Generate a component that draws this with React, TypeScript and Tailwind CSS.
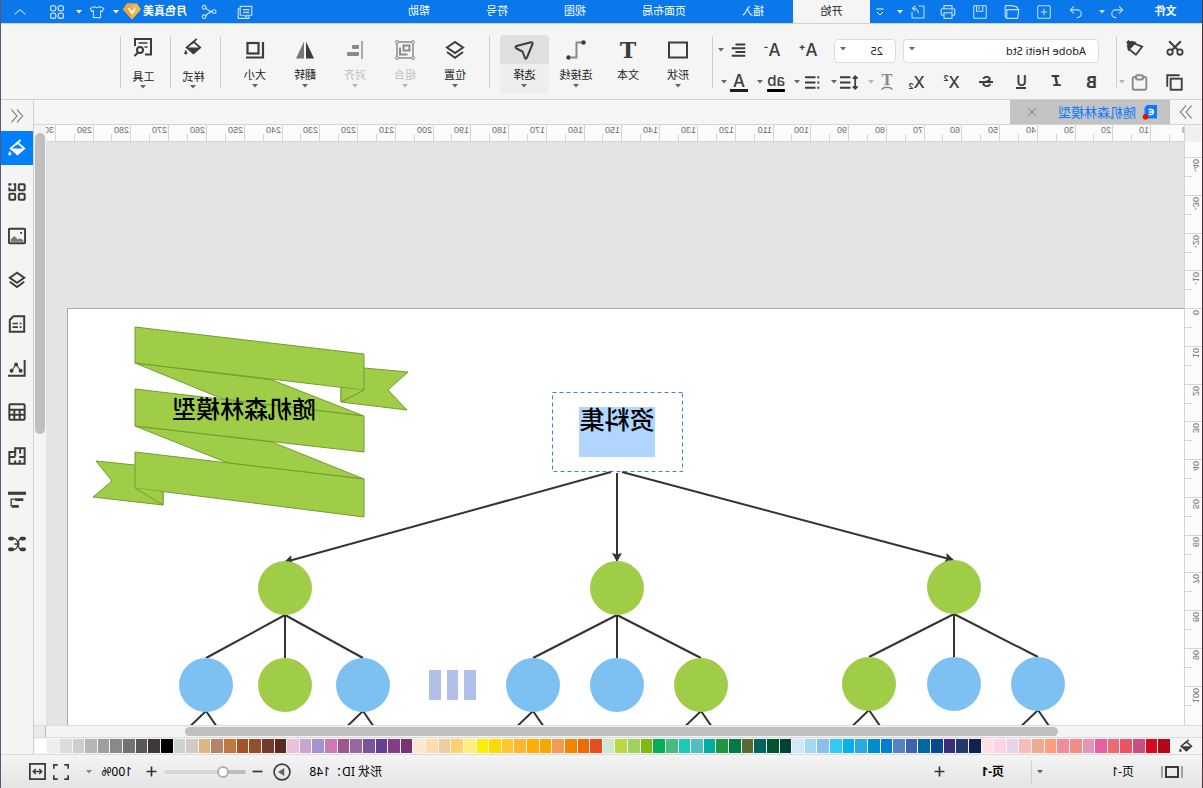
import type { ReactNode } from "react";

interface IconProps {
  children: ReactNode;
  size?: number;
  stroke?: number;
  className?: string;
}

/* All icons share a 20 unit grid */
function Icon({ children, size = 20, stroke = 2, className = "" }: IconProps) {
  return (
    <svg
      width={size}
      height={size}
      viewBox="0 0 20 20"
      fill="none"
      stroke="currentColor"
      strokeWidth={stroke}
      className={`shrink-0 ${className}`}
      aria-hidden="true"
    >
      {children}
    </svg>
  );
}

function Caret({ className = "w-[7px]" }: { className?: string }) {
  return (
    <span className={`flex shrink-0 justify-center ${className}`}>
      <svg width="6" height="4" viewBox="0 0 6 4" fill="currentColor" aria-hidden="true">
        <path d="M0 0h6L3 3.6z" />
      </svg>
    </span>
  );
}

function Bucket() {
  return (
    <>
      <path d="M9.5 4L17 10.500L9.500 17L2 10.500Z" />
      <path d="M2 10.500h15L9.500 17.500z" fill="currentColor" stroke="none" />
      <path d="M6 1l5.500 5.500" />
      <path d="M18 13l1.600 3a1.700 1.700 0 1 1-3.200 0z" fill="currentColor" stroke="none" />
    </>
  );
}

function Layers() {
  return (
    <>
      <path d="M10 2L18 7.500L10 13L2 7.500Z" />
      <path d="M2 12L10 17.800L18 12" />
    </>
  );
}

function Separator() {
  return <div className="mt-3 h-[52px] w-px shrink-0 bg-[#cfcfcf]" />;
}

interface ToolProps {
  label: string;
  children: ReactNode;
  className?: string;
}

function Tool({ label, children, className = "w-8" }: ToolProps) {
  return (
    <button
      type="button"
      aria-label={label}
      title={label}
      className={`flex h-full shrink-0 items-center justify-center ${className}`}
    >
      {children}
    </button>
  );
}

interface BigToolProps extends ToolProps {
  caret?: boolean;
  active?: boolean;
  disabled?: boolean;
  compact?: boolean;
}

function BigTool({ label, children, className = "w-[50px]", caret = true, active, disabled, compact }: BigToolProps) {
  return (
    <button
      type="button"
      disabled={disabled}
      className={`mt-[11px] flex h-[59px] shrink-0 flex-col items-center rounded-sm ${className} ${
        active ? "bg-[#eeeeee]" : ""
      } ${disabled ? "text-[#8a8a8a]" : "text-[#3c3c3c]"}`}
    >
      <span
        className={`flex w-full items-center justify-center rounded-t-sm ${compact ? "h-6" : "h-[29px]"} ${
          active ? "bg-[#dfdfdf]" : ""
        }`}
      >
        {children}
      </span>
      <span
        className={`text-[11px] leading-4 ${compact ? "mt-2.5" : "mt-[3px]"} ${
          disabled ? "text-[#c0c0c0]" : "text-[#222]"
        }`}
      >
        {label}
      </span>
      {caret && (
        <span className={compact ? "" : "mt-px"}>
          <Caret className={disabled ? "w-[7px] text-[#b8b8b8]" : "w-[7px] text-[#666]"} />
        </span>
      )}
    </button>
  );
}

const MENUS = [
  { label: "插入", width: "w-20" },
  { label: "页面布局", width: "w-[98px]" },
  { label: "视图", width: "w-20" },
  { label: "符号", width: "w-[76px]" },
  { label: "帮助", width: "w-20" },
];

function TitleBar() {
  return (
    <header className="flex h-[23px] shrink-0 items-center bg-[#0a77eb] text-[11px] text-white">
      <button type="button" className="w-[73px] font-bold">
        文件
      </button>
      <Tool label="撤销" className="w-6 text-[#c4defa]">
        <Icon size={14} stroke={1.6}>
          <path d="M7 2L2 7l5 5M2 7h10a5.500 5.500 0 0 1 0 11h-1" />
        </Icon>
      </Tool>
      <Caret className="w-1.5 text-[#c4defa]" />
      <Tool label="重做" className="ml-[7px] w-8 text-[#c4defa]">
        <Icon size={14} stroke={1.6}>
          <path d="M13 2l5 5-5 5M18 7H8a5.500 5.500 0 0 0 0 11h1" />
        </Icon>
      </Tool>
      <Tool label="新建" className="w-8 text-[#c4defa]">
        <Icon size={14} stroke={1.5}>
          <rect x="1" y="1" width="18" height="18" rx="1.500" />
          <path d="M10 5.500v9M5.500 10h9" />
        </Icon>
      </Tool>
      <Tool label="打开" className="w-8 text-[#c4defa]">
        <Icon size={16} stroke={1.4}>
          <path d="M1.500 7h15v11H3zM3 7V5l2-2h3l1.500-1H18l.5 1v13l-2 2" />
        </Icon>
      </Tool>
      <Tool label="保存" className="w-8 text-[#c4defa]">
        <Icon size={14} stroke={1.5}>
          <rect x="1" y="1" width="18" height="18" rx="1" />
          <path d="M6 1v8h9V1M11.500 3v3.500" />
        </Icon>
      </Tool>
      <Tool label="打印" className="w-8 text-[#c4defa]">
        <Icon size={16} stroke={1.4}>
          <path d="M5 6V2h10v4M5 14H2.500L1.500 13V7L2.500 6h15l1 1v6l-1 1H15" />
          <rect x="5" y="11" width="10" height="7" />
          <path d="M4 8.500h2" />
        </Icon>
      </Tool>
      <Tool label="导出" className="w-7 text-[#c4defa]">
        <Icon size={14} stroke={1.5}>
          <path d="M9 1.500H1.500v17h17V10" />
          <path d="M13 1.500l5 3-3.500 4.500M18 4.500c-5 0-8 3-9 7" />
        </Icon>
      </Tool>
      <Caret className="w-2" />
      <Tool label="自定义" className="ml-1.5 w-5">
        <Icon size={10} stroke={2}>
          <path d="M3 4h14M4 10l6 6 6-6" />
        </Icon>
      </Tool>
      <button type="button" className="h-full w-[77px] bg-[#f5f5f5] text-[#222]">
        开始
      </button>
      {MENUS.map((m) => (
        <button key={m.label} type="button" className={m.width}>
          {m.label}
        </button>
      ))}
      <div className="ml-auto flex h-full items-center">
        <Tool label="消息" className="w-9 text-[#c4defa]">
          <Icon size={16} stroke={1.4}>
            <path d="M1.500 3H16v11h-5l-3 2v-2H1.500zM16 6h2.500v12H5v-4M4.500 7h8M4.500 10.500h8" />
          </Icon>
        </Tool>
        <Tool label="分享" className="w-9 text-[#c4defa]">
          <Icon size={16} stroke={1.5}>
            <circle cx="3.500" cy="9.500" r="2.300" />
            <circle cx="16" cy="4" r="2.300" />
            <circle cx="16" cy="16" r="2.300" />
            <path d="M6 9.500C10 9 12 7.500 14 5.500M6 9.500c4 .5 6 2.500 8 5" />
          </Icon>
        </Tool>
        <button type="button" className="ml-1 flex items-center gap-0.5 font-bold">
          月色真美
          <svg width="18" height="17" viewBox="0 0 18 17" aria-hidden="true">
            <path d="M4 0.500h10l4 6L9 16.500 0 6.500z" fill="#f7b84b" />
            <path d="M9 16.500L18 6.500l-4-6H9z" fill="#eda63c" />
            <path d="M5.500 5L9 10l3.500-5" fill="none" stroke="#fff" strokeWidth="1.800" />
          </svg>
          <Caret className="ml-0.5 w-1.5" />
        </button>
        <Tool label="主题" className="ml-0.5 w-7 text-[#c4defa]">
          <Icon size={16} stroke={1.4}>
            <path d="M7 3c1 2 5 2 6 0l5.500 2.500-2 4-2-1V17h-9V8.500l-2 1-2-4z" />
          </Icon>
        </Tool>
        <Caret className="w-2" />
        <Tool label="应用" className="w-9 text-[#c4defa]">
          <Icon size={16} stroke={1.6}>
            <rect x="2" y="2" width="6.500" height="6.500" rx="2.500" />
            <rect x="11.500" y="2" width="6.500" height="6.500" rx="2.500" />
            <rect x="2" y="11.500" width="6.500" height="6.500" rx="2.500" />
            <rect x="11.500" y="11.500" width="6.500" height="6.500" rx="2.500" />
          </Icon>
        </Tool>
        <Tool label="收起" className="w-[38px] text-[#c4defa]">
          <Icon size={12} stroke={1.8}>
            <path d="M1 14l9-8 9 8" />
          </Icon>
        </Tool>
      </div>
    </header>
  );
}

function ClipboardTools() {
  return (
    <div className="w-[85px] shrink-0 pl-[7px] pt-2 text-[#3c3c3c]">
      <div className="flex h-8 items-center">
        <Tool label="剪切" className="w-10">
          <Icon size={18}>
            <circle cx="4.500" cy="14.500" r="3" />
            <circle cx="15.500" cy="14.500" r="3" />
            <path d="M3.500 2.500L13.500 12.500M16.500 2.500L6.500 12.500" strokeWidth="2.200" />
          </Icon>
        </Tool>
        <Tool label="格式刷" className="w-10">
          <Icon size={18}>
            <path d="M2 8.500L11 5l6 6-8 6.500Z" />
            <path d="M10 4l4-1 4 4-1 4.500z" fill="currentColor" />
            <path d="M15 6l3.500-3.500" strokeWidth="4" />
          </Icon>
        </Tool>
      </div>
      <div className="mt-0.5 flex h-8 items-center">
        <Tool label="复制" className="w-10">
          <Icon size={17} stroke={2.2}>
            <path d="M4 1.500h14.500V15" />
            <rect x="1.500" y="5.500" width="13" height="13" />
          </Icon>
        </Tool>
        <Tool label="粘贴" className="w-[30px] text-[#8a8a8a]">
          <Icon size={17} stroke={2.2}>
            <rect x="2" y="3.500" width="16" height="15" rx="2" />
            <rect x="6" y="1.500" width="8" height="5" rx="1" fill="#f5f5f5" />
          </Icon>
        </Tool>
        <Caret className="w-1.5 text-[#b5b5b5]" />
      </div>
    </div>
  );
}

function FontTools() {
  return (
    <div className="w-[403px] shrink-0 pt-2.5 text-[#3c3c3c]">
      <div className="flex h-8 items-center pl-[17px]">
        <label className="relative block w-[196px] text-[#666]">
          <select
            aria-label="字体"
            className="h-6 w-full appearance-none rounded-sm border border-[#dcdcdc] bg-white pl-3 text-[11px] text-[#222]"
          >
            <option>Adobe Heiti Std</option>
          </select>
          <Caret className="pointer-events-none absolute right-1.5 top-2.5 w-1.5" />
        </label>
        <label className="relative ml-[7px] block w-[62px] text-[#666]">
          <select
            aria-label="字号"
            className="h-6 w-full appearance-none rounded-sm border border-[#dcdcdc] bg-white pl-3 text-[11px] text-[#222]"
          >
            <option>25</option>
          </select>
          <Caret className="pointer-events-none absolute right-1.5 top-2.5 w-1.5" />
        </label>
        <Tool label="增大字号" className="ml-2 w-9 font-['Inter',sans-serif]">
          <span className="text-[17px] font-medium leading-none">A</span>
          <span className="-mt-2 text-[10px] font-bold leading-none">+</span>
        </Tool>
        <Tool label="减小字号" className="w-9 font-['Inter',sans-serif]">
          <span className="text-[17px] font-medium leading-none">A</span>
          <span className="-mt-2 text-[10px] font-bold leading-none">-</span>
        </Tool>
        <Tool label="对齐方式" className="w-[30px]">
          <Icon size={15} stroke={2.6}>
            <path d="M1 2h13M1 7h18M1 12h13M1 17h18" />
          </Icon>
        </Tool>
        <Caret className="w-1.5 text-[#666]" />
      </div>
      <div className="flex h-8 items-center pl-[7px]">
        <Tool label="加粗" className="w-[35px] font-['Inter',sans-serif]">
          <span className="text-[16px] font-bold">B</span>
        </Tool>
        <Tool label="斜体" className="w-[35px]">
          <span className="font-['Liberation_Mono',monospace] text-[17px] font-bold italic">I</span>
        </Tool>
        <Tool label="下划线" className="w-[35px] flex-col font-['Inter',sans-serif]">
          <span className="text-[14px] font-semibold leading-3">U</span>
          <span className="h-0.5 w-2.5 bg-[#3c3c3c]" />
        </Tool>
        <Tool label="删除线" className="w-[35px] font-['Inter',sans-serif]">
          <span className="relative text-[15px] font-semibold">
            S
            <span className="absolute -left-0.5 top-2.5 h-0.5 w-3.5 bg-[#3c3c3c]" />
          </span>
        </Tool>
        <Tool label="上标" className="w-[35px] font-['Inter',sans-serif]">
          <span className="text-[16px] font-medium leading-none">X</span>
          <span className="-mt-2 text-[8px] font-bold leading-none">2</span>
        </Tool>
        <Tool label="下标" className="w-[35px] font-['Inter',sans-serif]">
          <span className="text-[16px] font-medium leading-none">X</span>
          <span className="mt-2 text-[8px] font-bold leading-none">2</span>
        </Tool>
        <Tool label="艺术字" className="w-6 flex-col text-[#8a8a8a]">
          <span className="font-['DejaVu_Serif',serif] text-[14px] font-bold leading-3">T</span>
          <svg width="12" height="4" viewBox="0 0 12 4" fill="none" stroke="currentColor" strokeWidth="1.500" aria-hidden="true">
            <path d="M.5 3.500C3 .5 9 .5 11.500 3.500" />
          </svg>
        </Tool>
        <Caret className="mr-1.5 w-[7px] text-[#b5b5b5]" />
        <Tool label="行距" className="w-6">
          <Icon size={19}>
            <path d="M4 4v12M1.500 6L4 3.500 6.500 6M1.500 14L4 16.500 6.500 14" strokeWidth="1.800" />
            <path d="M9 4.500h11M9 10h11M9 15.500h11" strokeWidth="2.200" />
          </Icon>
        </Tool>
        <Caret className="mr-1.5 w-[7px] text-[#666]" />
        <Tool label="项目符号" className="w-6">
          <Icon size={15} stroke={2.6}>
            <path d="M1 3h2.500M1 10h2.500M1 17h2.500M6 3h14M6 10h14M6 17h14" />
          </Icon>
        </Tool>
        <Caret className="mr-1.5 w-[7px] text-[#666]" />
        <Tool label="突出显示" className="w-6 flex-col font-['Inter',sans-serif]">
          <span className="text-[15px] font-medium leading-4">ab</span>
          <span className="h-[3px] w-[18px] bg-black" />
        </Tool>
        <Caret className="mr-1.5 w-[7px] text-[#666]" />
        <Tool label="字体颜色" className="w-6 flex-col font-['Inter',sans-serif]">
          <span className="text-[17px] font-medium leading-4">A</span>
          <span className="h-[3px] w-[18px] bg-[#1c1c1c]" />
        </Tool>
        <Caret className="text-[#666]" />
      </div>
    </div>
  );
}

function RibbonBar() {
  return (
    <div className="flex h-[77px] shrink-0 border-b border-t border-[#d0d0d0] bg-[#f5f5f5]">
      <ClipboardTools />
      <Separator />
      <FontTools />
      <Separator />
      <BigTool label="形状" className="ml-[9px] w-[50px]">
        <Icon>
          <rect x="1" y="2.500" width="18" height="15" />
        </Icon>
      </BigTool>
      <BigTool label="文本" caret={false}>
        <span className="font-['DejaVu_Serif',serif] text-[22px] font-bold leading-none">T</span>
      </BigTool>
      <BigTool label="连接线" className="w-[54px]">
        <Icon>
          <path d="M4 2.500h5.500v15H15" stroke="#8a8a8a" />
          <circle cx="2.500" cy="2.500" r="2.200" fill="currentColor" stroke="none" />
          <circle cx="17.500" cy="17.500" r="2.200" fill="currentColor" stroke="none" />
        </Icon>
      </BigTool>
      <BigTool label="选择" className="w-[49px]" active>
        <Icon>
          <path d="M1.500 4Q1 2 3 2.200L17.500 6Q19.500 7 17.500 8.500L11.500 11.500 9 18Q8.200 19.500 7.200 17.800Z" strokeLinejoin="round" />
        </Icon>
      </BigTool>
      <div className="w-[10px] shrink-0" />
      <Separator />
      <BigTool label="位置" className="ml-[9px] w-[50px]">
        <Icon>
          <Layers />
        </Icon>
      </BigTool>
      <BigTool label="组合" disabled>
        <Icon stroke={1.5}>
          <rect x="2" y="2" width="16" height="16" />
          <rect x="5.500" y="5.500" width="6" height="5" strokeWidth="2" />
          <path d="M8.500 13.500v1H15V8.500h-1" strokeWidth="2" />
          <g fill="#f5f5f5" strokeWidth="1">
            <circle cx="2" cy="2" r="1.500" />
            <circle cx="18" cy="2" r="1.500" />
            <circle cx="2" cy="18" r="1.500" />
            <circle cx="18" cy="18" r="1.500" />
          </g>
        </Icon>
      </BigTool>
      <BigTool label="对齐" disabled>
        <Icon>
          <path d="M3 1v18" stroke="#a8a8a8" />
          <rect x="6" y="5" width="7" height="4" rx="1" fill="currentColor" stroke="none" />
          <rect x="6" y="12" width="12" height="4" rx="1" fill="currentColor" stroke="none" />
        </Icon>
      </BigTool>
      <BigTool label="翻转">
        <Icon>
          <path d="M9 1.500V18.500H1z" fill="currentColor" stroke="none" />
          <path d="M11 1.500V18.500h8z" fill="#777" stroke="none" />
        </Icon>
      </BigTool>
      <BigTool label="大小">
        <Icon stroke={2.2}>
          <rect x="6.500" y="3" width="11" height="10.500" />
          <path d="M2 2v15.500h17" />
        </Icon>
      </BigTool>
      <div className="w-[9px] shrink-0" />
      <Separator />
      <BigTool label="样式" className="w-[49px] pl-1" compact>
        <Icon size={18}>
          <Bucket />
        </Icon>
      </BigTool>
      <Separator />
      <BigTool label="工具" className="w-[49px] pl-1" compact>
        <Icon size={20}>
          <path d="M8 17.500H2V2h16v7" />
          <path d="M5.500 6h9M5.500 10h3" strokeWidth="1.600" />
          <circle cx="13" cy="13" r="3" />
          <path d="M15 15.500l3.500 3.500" />
        </Icon>
      </BigTool>
      <Separator />
    </div>
  );
}

function DocumentTabs() {
  return (
    <div className="flex h-[25px] shrink-0 border-b border-[#d4d4d4] bg-[#f5f5f5]">
      <button type="button" aria-label="收起面板" className="flex w-8 items-center justify-center text-[#777]">
        <Icon size={14} stroke={1.6}>
          <path d="M2 1l8 9-8 9M10 1l8 9-8 9" />
        </Icon>
      </button>
      <div className="flex w-40 items-center bg-[#c3c3c3] pl-3">
        <svg width="16" height="16" viewBox="0 0 16 16" className="shrink-0" aria-hidden="true">
          <path d="M1 1h10l2.500 3v10.500H1z" fill="#0a7bff" />
          <path d="M9.500 5.500H7a2.500 2.500 0 0 0 0 5h2.500M5 8h4" fill="none" stroke="#fff" strokeWidth="1.300" />
          <circle cx="12.500" cy="12.800" r="2.800" fill="#f00" />
        </svg>
        <a href="#doc" className="ml-1.5 text-[13px] leading-5 text-[#0a7bff]">
          随机森林模型
        </a>
        <button type="button" aria-label="关闭" className="ml-[22px] text-[#777]">
          <Icon size={8} stroke={2.4}>
            <path d="M1 1l18 18M19 1L1 19" />
          </Icon>
        </button>
      </div>
    </div>
  );
}

const TICK = 37.77;

function HorizontalRuler() {
  return (
    <div className="h-[17px] min-w-0 flex-1 overflow-hidden border-b border-[#d4d4d4] bg-[#fbfbfb]">
      <svg width="1500" height="16" className="max-w-none font-['Liberation_Sans',sans-serif]" aria-hidden="true">
        {Array.from({ length: 31 }, (_, i) => {
          const x = Math.round(i * TICK) - 5;
          return (
            <g key={i}>
              <rect x={x} y={0} width={1} height={16} fill="#d4d4d4" />
              <rect x={x + 19} y={9} width={1} height={7} fill="#d4d4d4" />
              <text x={x + 2} y={8} fontSize={9} fill="#6d6d6d">
                {i * 10}
              </text>
            </g>
          );
        })}
      </svg>
    </div>
  );
}

function VerticalRuler() {
  return (
    <div className="w-[18px] shrink-0 overflow-hidden border-r border-[#d4d4d4] bg-[#fbfbfb]">
      <svg width="17" height="1200" className="font-['Liberation_Sans',sans-serif]" aria-hidden="true">
        {Array.from({ length: 15 }, (_, i) => {
          const y = 15 + Math.round(i * TICK);
          return (
            <g key={i}>
              <rect x={0} y={y} width={17} height={1} fill="#d4d4d4" />
              <rect x={10} y={y + 19} width={7} height={1} fill="#d4d4d4" />
              <text
                transform={`translate(9 ${y + 2}) rotate(-90)`}
                textAnchor="end"
                fontSize={9}
                fill="#6d6d6d"
              >
                {(i - 4) * 10}
              </text>
            </g>
          );
        })}
      </svg>
    </div>
  );
}

const GREEN = "#9fcd48";
const BLUE = "#7dc1f2";

const TREES = [
  { x: 230, y: 445, kids: [{ x: 146, fill: BLUE, leaf: true }, { x: 230, fill: BLUE, leaf: false }, { x: 315, fill: GREEN, leaf: true }] },
  { x: 567, y: 446, kids: [{ x: 483, fill: GREEN, leaf: true }, { x: 567, fill: BLUE, leaf: false }, { x: 651, fill: BLUE, leaf: true }] },
  { x: 899, y: 446, kids: [{ x: 821, fill: BLUE, leaf: true }, { x: 899, fill: GREEN, leaf: false }, { x: 978, fill: BLUE, leaf: true }] },
];

function Diagram() {
  return (
    <svg
      width="1138"
      height="1000"
      className="absolute left-0 top-0 max-w-none font-['Noto_Sans_CJK_SC',sans-serif]"
      role="img"
      aria-label="随机森林模型"
    >
      <defs>
        <marker id="arrow" markerWidth="10" markerHeight="10" refX="8" refY="5" orient="auto" markerUnits="userSpaceOnUse">
          <path d="M0 0L9 5L0 10L1.500 5z" fill="#333" />
        </marker>
      </defs>

      {/* Banner: tails, folded strips, then the three front bands */}
      <g fill={GREEN} stroke="#739c2c" strokeWidth="1" strokeLinejoin="round">
        <path d="M843 240V260L777 268L796 248L776 230L820 226L843 240M843 260L820 248" />
        <path d="M1088 319L1049 323L1021 340V363L1091 355L1072 339Z" />
        <path d="M1049 221L912 238L820 274L961 257Z" />
        <path d="M1049 284L912 300L820 337L956 321Z" />
        <path d="M1049 185L820 212V248L1049 221Z" />
        <path d="M1049 247L820 274V310L1049 284Z" />
        <path d="M1049 310L820 337V375L1049 346Z" />
        <path d="M843 246V260L820 248M1021 350V363L1049 346" />
      </g>
      <text x="940" y="276" fontSize="24" fontWeight="500" textAnchor="middle">
        随机森林模型
      </text>

      {/* Root node, in text editing state */}
      <rect x="501.500" y="250.500" width="130" height="79" fill="#fff" stroke="#3d85dc" strokeDasharray="4 3" />
      <rect x="529" y="265" width="76" height="50" fill="#b0d5ff" />
      <text x="567" y="287" fontSize="25" fontWeight="500" textAnchor="middle">
        资料集
      </text>

      <g stroke="#333" strokeWidth="2" fill="none">
        <path d="M562 330L231 418" markerEnd="url(#arrow)" />
        <path d="M567 331V419" markerEnd="url(#arrow)" />
        <path d="M573 330L899 420" markerEnd="url(#arrow)" />
        {TREES.map((t) =>
          t.kids.map((k) => (
            <g key={k.x}>
              <path d={`M${t.x} ${t.y + 27}L${k.x} ${t.y + 70}`} />
              {k.leaf && <path d={`M${k.x - 20} ${t.y + 152}L${k.x} ${t.y + 123}L${k.x + 28} ${t.y + 150}`} />}
            </g>
          ))
        )}
      </g>
      {TREES.map((t) => (
        <g key={t.x}>
          <circle cx={t.x} cy={t.y} r="27" fill={GREEN} />
          {t.kids.map((k) => (
            <circle key={k.x} cx={k.x} cy={t.y + 97} r="27" fill={k.fill} />
          ))}
        </g>
      ))}
      <path d="M708 528h12v30h-12zM726 528h11v30h-11zM743 528h12v30h-12z" fill="#b1c0e8" />
    </svg>
  );
}

const PALETTE = [
  "#b40717", "#d70b1f", "#c8507a", "#e85464", "#eb6b70", "#e660a0", "#e295b5", "#ee8d8a", "#f08d9b", "#ff9e7a",
  "#efaa94", "#f6bebb", "#e8d4e8", "#ffd3e5", "#fde0e6", "#11214f", "#223a70", "#3d2d78", "#084890", "#0068a3",
  "#3e62ae", "#5583c5", "#007fcf", "#008dcf", "#2ba8e0", "#00b3ef", "#31c9f9", "#89c1ea", "#a2daf0", "#cfeaf6",
  "#004038", "#00572f", "#006460", "#566c2e", "#007a45", "#1f9640", "#00ada0", "#52bec2", "#1acbb3", "#4aba80",
  "#00b052", "#7fba10", "#a3d065", "#bcd83f", "#cfe7cb", "#e35020", "#ed6a00", "#f18500", "#f59a55", "#f3a800",
  "#ffad00", "#ffb733", "#fbc834", "#ffd900", "#ffee00", "#fdf07f", "#ffd26e", "#ebce99", "#fedcae", "#fce8d1",
  "#7a3272", "#823f86", "#683f98", "#76559b", "#9769a0", "#9e578c", "#cd7ab2", "#a891d0", "#c7a6ca", "#e9c1db",
  "#592a1e", "#753a2e", "#954e2b", "#a75328", "#bf793f", "#b4846c", "#deb684", "#d4cac5", "#c9d5cc", "#000000",
  "#3e3837", "#595959", "#717171", "#898989", "#9f9f9f", "#b4b7b6", "#cdcfce", "#dcdcdc", "#eeeeee", "#ffffff",
];

function Workspace() {
  return (
    <main className="flex min-w-0 flex-1 flex-col">
      <DocumentTabs />
      <div className="flex min-h-0 flex-1">
        <div className="flex min-w-0 flex-1 flex-col">
          <div className="flex">
            <div className="h-[17px] w-[18px] shrink-0 border-r border-[#d4d4d4] bg-[#f0f0f0]" />
            <HorizontalRuler />
          </div>
          <div className="flex min-h-0 flex-1">
            <VerticalRuler />
            <div className="relative min-w-0 flex-1 overflow-hidden bg-[#e4e4e4] pr-[21px] pt-[166px]">
              <div className="h-full border-r border-t border-[#ababab] bg-white" />
              <Diagram />
            </div>
          </div>
        </div>
        <div className="w-3 shrink-0 bg-[#f4f4f4] px-px pt-2">
          <div className="h-[301px] rounded-full bg-[#bfbfbf]" />
        </div>
      </div>
      <div className="flex h-[13px] shrink-0 border-b border-t border-[#dcdcdc] bg-[#f4f4f4]">
        <div className="flex-1 py-px pl-36 pr-[139px]">
          <div className="h-full rounded-full bg-[#bfbfbf]" />
        </div>
        <div className="w-3 border-l border-[#b8b8b8] bg-[#e9e9e9]" />
      </div>
      <div className="flex h-4 shrink-0 items-center bg-[#f5f5f5]">
        <Tool label="填充" className="w-8 text-[#3c3c3c]">
          <Icon size={14} stroke={2}>
            <Bucket />
          </Icon>
        </Tool>
        <div className="flex h-[14px] min-w-0 flex-1 gap-px pr-px">
          {PALETTE.map((color) => (
            <button key={color} type="button" aria-label={color} className="min-w-0 flex-1" style={{ background: color }} />
          ))}
        </div>
      </div>
    </main>
  );
}

const PANELS: { label: string; icon: ReactNode }[] = [
  {
    label: "符号库",
    icon: (
      <>
        <rect x="1.500" y="1.500" width="6.500" height="6.500" rx="1" />
        <path d="M14 1.500h-2v6.500h6.500V5M16 1.500h2.500v1.500" />
        <rect x="1.500" y="12" width="6.500" height="6.500" rx="1" />
        <rect x="12" y="12" width="6.500" height="6.500" rx="1" />
      </>
    ),
  },
  {
    label: "图片",
    icon: (
      <>
        <rect x="1" y="2" width="18" height="16" rx="1" />
        <path d="M3 16.500v-2l4-2 2 1.500 4-4 4 4v2.500z" fill="#777" stroke="none" />
        <circle cx="5.500" cy="6.500" r="1.200" fill="currentColor" stroke="none" />
      </>
    ),
  },
  { label: "图层", icon: <Layers /> },
  {
    label: "注释",
    icon: (
      <>
        <path d="M2 1.500h12l4 4v13H2z" />
        <path d="M5 9.500h2M9 9.500h6M5 13.500h2M9 13.500h6" strokeWidth="1.800" />
      </>
    ),
  },
  {
    label: "图表",
    icon: (
      <>
        <path d="M1.500 1v17.500H20" />
        <path d="M6 13l5-7 5 7" strokeWidth="1.200" />
        <g fill="currentColor" stroke="none">
          <circle cx="6" cy="13" r="2.200" />
          <circle cx="11" cy="6" r="2.200" />
          <circle cx="16" cy="13" r="2.200" />
        </g>
      </>
    ),
  },
  {
    label: "表格",
    icon: (
      <>
        <rect x="1.500" y="1.500" width="17" height="17" rx="1" />
        <path d="M1.500 7.500h17M1.500 13h17M7 7.500V18M13 7.500V18" />
      </>
    ),
  },
  {
    label: "平面图",
    icon: (
      <>
        <path d="M1.500 1.500H12v4h6.500v13h-17z" />
        <path d="M6.500 1.500v6M1.500 11h6M7 18.500v-4M12 5v5.500M12 18.500V15M18.500 11H12" />
      </>
    ),
  },
  {
    label: "甘特图",
    icon: (
      <>
        <path d="M0 2.500h20" strokeWidth="3.500" />
        <path d="M3 9.500h9M8 17h8" strokeWidth="3" />
        <path d="M11 9h5.500v8" strokeWidth="1.500" />
      </>
    ),
  },
  {
    label: "思维导图",
    icon: (
      <>
        <path d="M4 4h2c4 0 1 12 7 12h3M4 16h2c4 0 1-12 7-12h3M7 10h6" strokeWidth="1.500" />
        <path d="M2 4h3M15 4h3M2 16h3M15 16h3" strokeWidth="4" strokeLinecap="round" />
      </>
    ),
  },
];

function SideBar() {
  return (
    <aside className="flex w-[33px] shrink-0 flex-col border-l border-[#d0d0d0] bg-[#f4f4f4] text-[#3c3c3c]">
      <button type="button" aria-label="展开面板" className="flex h-[31px] items-center justify-center text-[#777]">
        <Icon size={14} stroke={1.6}>
          <path d="M10 1L2 10l8 9M18 1l-8 9 8 9" />
        </Icon>
      </button>
      <button type="button" aria-label="样式" className="flex h-[34px] items-center justify-center bg-[#0080ff] text-white">
        <Icon size={18}>
          <Bucket />
        </Icon>
      </button>
      <div className="mt-[5px] flex flex-col">
        {PANELS.map((p) => (
          <button key={p.label} type="button" aria-label={p.label} className="flex h-11 items-center justify-center">
            <Icon size={18} stroke={2.2}>
              {p.icon}
            </Icon>
          </button>
        ))}
      </div>
    </aside>
  );
}

function StatusBar() {
  return (
    <footer className="flex h-[34px] shrink-0 items-center border-t border-[#dcdcdc] bg-linear-to-b from-[#f4f4f4] to-[#e4e4e4] text-[12px] text-black">
      <Tool label="页面" className="w-[60px] text-[#3c3c3c]">
        <svg width="22" height="14" viewBox="0 0 22 14" fill="none" stroke="currentColor" aria-hidden="true">
          <path d="M1 1v12M21 1v12" stroke="#888" strokeWidth="1.500" />
          <rect x="5" y="2" width="12" height="10" strokeWidth="2" />
        </svg>
      </Tool>
      <button type="button" className="ml-2 w-[91px] text-left">
        页-1
      </button>
      <Caret className="w-1.5 text-[#666]" />
      <div className="ml-[5px] h-6 w-px bg-[#d0d0d0]" />
      <button type="button" className="ml-[27px] w-12 text-left font-bold">
        页-1
      </button>
      <Tool label="添加页面" className="w-8 text-[#333]">
        <Icon size={11} stroke={3}>
          <path d="M10 1v18M1 10h18" />
        </Icon>
      </Tool>
      <div className="ml-auto flex h-full items-center">
        <span className="w-[88px]">形状 ID：148</span>
        <Tool label="演示" className="w-6 text-[#3c3c3c]">
          <Icon size={18} stroke={1.8}>
            <circle cx="10" cy="10" r="8.800" />
            <path d="M7.500 5.500v9l7-4.500z" fill="#666" stroke="none" />
          </Icon>
        </Tool>
        <Tool label="缩小" className="w-6 text-[#333]">
          <Icon size={11} stroke={3}>
            <path d="M1 10h18" />
          </Icon>
        </Tool>
        <input
          type="range"
          aria-label="缩放"
          defaultValue={24}
          className="h-1 w-[82px] appearance-none rounded-full bg-linear-to-r from-[#bdbdbd] from-28% to-[#d6d6d6] to-28% [&::-webkit-slider-thumb]:h-3 [&::-webkit-slider-thumb]:w-3 [&::-webkit-slider-thumb]:appearance-none [&::-webkit-slider-thumb]:rounded-full [&::-webkit-slider-thumb]:border-2 [&::-webkit-slider-thumb]:border-[#b0b0b0] [&::-webkit-slider-thumb]:bg-white"
        />
        <Tool label="放大" className="w-6 text-[#333]">
          <Icon size={11} stroke={3}>
            <path d="M10 1v18M1 10h18" />
          </Icon>
        </Tool>
        <button type="button" className="ml-2 flex items-center">
          <span className="w-10 text-left">100%</span>
          <Caret className="w-1.5 text-[#888]" />
        </button>
        <Tool label="全屏" className="ml-3.5 w-[22px] text-[#3c3c3c]">
          <Icon size={16} stroke={2.2}>
            <path d="M1 6V1h5M14 1h5v5M19 14v5h-5M6 19H1v-5" />
          </Icon>
        </Tool>
        <Tool label="适应宽度" className="mr-[25px] w-6 text-[#3c3c3c]">
          <Icon size={17} stroke={2.2}>
            <rect x="1" y="1" width="18" height="18" />
            <path d="M5 10h10M8 7l-3 3 3 3M12 7l3 3-3 3" strokeWidth="1.800" />
          </Icon>
        </Tool>
      </div>
    </footer>
  );
}

/* The whole editor is shown flipped, as seen in a mirror */
export default function App() {
  return (
    <div className="flex h-screen w-full -scale-x-100 flex-col overflow-hidden border-l border-r border-l-[#4d3434] border-r-[#5a5770] bg-[#f5f5f5] font-['Noto_Sans','Noto_Sans_CJK_SC',sans-serif]">
      <TitleBar />
      <RibbonBar />
      <div className="flex min-h-0 flex-1">
        <Workspace />
        <SideBar />
      </div>
      <StatusBar />
    </div>
  );
}
